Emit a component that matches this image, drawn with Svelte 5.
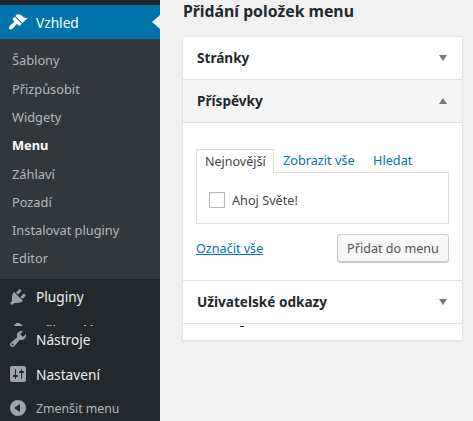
<script>
  const subs = [
    { t: 'Šablony' }, { t: 'Přizpůsobit' }, { t: 'Widgety' }, { t: 'Menu', cur: true },
    { t: 'Záhlaví' }, { t: 'Pozadí' }, { t: 'Instalovat pluginy' }, { t: 'Editor' }
  ];
</script>

<div class="page">
  <nav class="side">
    <div class="top"></div>
    <div class="active">
      <svg class="ic" viewBox="0 0 20 20"><path d="M14.480 11.060L7.410 3.990l1.500-1.500c.5-.56 2.300-.47 3.510.32 1.210.8 1.430 1.280 2.910 2.100 1.180.64 2.450 1.260 4.450.85zm-.71.71L6.700 4.700 4.930 6.470c-.39.39-.39 1.020 0 1.410l1.060 1.060c.39.39.39 1.030 0 1.420-.6.6-1.430 1.110-2.210 1.690-.35.26-.7.53-1.010.84C1.430 14.230.4 16.080 1.400 17.070c.99 1 2.840-.03 4.180-1.360.31-.31.58-.66.85-1.020.57-.78 1.080-1.610 1.690-2.210.39-.39 1.020-.39 1.410 0l1.060 1.060c.39.39 1.020.39 1.410 0z" fill="#fff"/></svg>
      <span class="lab">Vzhled</span>
      <i class="notch"></i>
    </div>
    <ul class="sub">
      {#each subs as s}
        <li class:cur={s.cur}>{s.t}</li>
      {/each}
    </ul>
    <div class="item plug">
      <svg class="ic" viewBox="0 0 20 20"><path d="M13.110 4.360L9.870 7.600 8 5.730l3.240-3.240c.35-.34 1.050-.2 1.560.32.52.51.66 1.210.31 1.550zm-8 1.770l.91-1.120 9.010 9.010-1.190.84c-.71.71-2.630 1.160-3.820 1.160H6.140L4.900 17.260c-.59.59-1.540.59-2.120 0-.59-.58-.59-1.530 0-2.120l1.240-1.240v-3.880c0-1.130.4-3.190 1.090-3.890zm7.260 3.970l3.240-3.240c.34-.35 1.040-.21 1.550.31.52.51.66 1.210.31 1.550l-3.240 3.250z" fill="#9ea3a8"/></svg>
      <span class="lab">Pluginy</span>
    </div>
    <div class="clip">
      <svg class="ic" viewBox="0 0 20 20"><circle cx="10" cy="6.500" r="4.500" fill="#9ea3a8"/></svg>
      <span class="lab">Uživatelé</span>
    </div>
    <div class="item tools">
      <svg class="ic" viewBox="0 0 20 20"><path d="M16.680 9.770c-1.340 1.340-3.300 1.670-4.950.99l-5.410 6.520c-.99.99-2.590.99-3.580 0s-.99-2.590 0-3.570l6.520-5.420c-.68-1.650-.35-3.610.99-4.950 1.280-1.280 3.120-1.620 4.720-1.060l-2.890 2.890 2.820 2.820 2.860-2.870c.53 1.580.18 3.390-1.080 4.650zM3.810 16.210c.4.39 1.040.39 1.430 0 .4-.4.4-1.040 0-1.430-.39-.4-1.030-.4-1.430 0-.39.39-.39 1.030 0 1.430z" fill="#9ea3a8"/></svg>
      <span class="lab">Nástroje</span>
    </div>
    <div class="item settings">
      <svg class="ic" viewBox="0 0 20 20"><path d="M18 16V4c0-1.100-.9-2-2-2H4c-1.100 0-2 .9-2 2v12c0 1.100.9 2 2 2h12c1.100 0 2-.9 2-2zM8 11h1c.55 0 1 .45 1 1s-.45 1-1 1H8v1.500c0 .28-.22.5-.5.5s-.5-.22-.5-.5V13H6c-.55 0-1-.45-1-1s.45-1 1-1h1V5.500c0-.28.22-.5.5-.5s.5.22.5.5V11zm5-2h-1c-.55 0-1-.45-1-1s.45-1 1-1h1V5.500c0-.28.22-.5.5-.5s.5.22.5.5V7h1c.55 0 1 .45 1 1s-.45 1-1 1h-1v5.500c0 .28-.22.5-.5.5s-.5-.22-.5-.5V9z" fill="#9ea3a8"/></svg>
      <span class="lab">Nastavení</span>
    </div>
    <div class="item collapse">
      <svg class="ic" viewBox="0 0 20 20"><circle cx="10" cy="10" r="8" fill="#9ea3a8"/><path d="M12 6v8l-6-4z" fill="#23282d"/></svg>
      <span class="lab small">Zmenšit menu</span>
    </div>
  </nav>

  <main>
    <h3>Přidání položek menu</h3>
    <section class="box">
      <header><b>Stránky</b><i class="tri down"></i></header>
      <header class="open"><b>Příspěvky</b><i class="tri up"></i></header>
      <div class="body">
        <div class="tabs">
          <span class="tab on">Nejnovější</span>
          <span class="tab">Zobrazit vše</span>
          <span class="tab">Hledat</span>
        </div>
        <div class="panel">
          <span class="check"></span><span class="ptext">Ahoj Světe!</span>
        </div>
        <div class="actions">
          <a href="#all">Označit vše</a>
          <button>Přidat do menu</button>
        </div>
      </div>
      <header class="last"><b>Uživatelské odkazy</b><i class="tri down"></i></header>
      <div class="foot"><i class="speck"></i></div>
    </section>
  </main>
</div>

<style>
  :global(body) { margin: 0; background: #f1f1f1; overflow: hidden; }
  * { box-sizing: border-box; }
  .page { display: flex; width: 473px; height: 421px; overflow: hidden; font-family: "Noto Sans", sans-serif; font-size: 13px; color: #444; }
  .side { width: 160px; flex: none; background: #23282d; height: 421px; display: flex; flex-direction: column; }
  .side > * { flex: none; }
  .top { height: 5px; }
  .active { height: 34px; background: #0073aa; display: flex; align-items: center; position: relative; color: #fff; }
  .ic { width: 20px; height: 20px; margin-left: 8px; flex: none; }
  .lab { margin-left: 8px; font-size: 13.700px; color: #eee; }
  .active .lab { color: #fff; }
  .notch { position: absolute; right: 0; top: 10px; border: 7px solid transparent; border-left: 0; border-right: 8px solid #f1f1f1; }
  .sub { list-style: none; margin: 0; padding: 6.400px 0 0; background: #32373c; height: 240px; }
  .sub li { height: 28.300px; line-height: 30px; padding-left: 12px; color: #b4b9be; font-size: 12.800px; }
  .sub li.cur { color: #fff; font-weight: 700; }
  .item { display: flex; align-items: center; height: 34px; }
  .plug { height: 35px; }
  .clip { height: 12px; overflow: hidden; display: flex; align-items: flex-start; }
  .clip .ic { margin-top: 7px; }
  .clip .lab { line-height: 14px; margin-top: 10px; }
  .tools { height: 31px; padding-bottom: 5px; }
  .settings { height: 34px; }
  .collapse { height: 30px; padding-top: 4px; }
  .small { font-size: 12.300px; color: #b4b9be; }
  main { flex: 1; padding: 1px 24px 0 23px; }
  h3 { margin: 0; font-size: 15.800px; font-weight: 700; line-height: 20px; color: #23282d; }
  .box { margin-top: 15px; background: #fff; border: 1px solid #e5e5e5; box-shadow: 0 1px 1px rgba(0,0,0,.04); width: 281px; margin-left: -1px; }
  header { height: 43px; display: flex; align-items: center; justify-content: space-between; padding: 0 14px 2px; border-bottom: 1px solid #e1e1e1; color: #23282d; font-size: 13.600px; }
  header.open { background: #f5f5f5; }
  .tri { width: 0; height: 0; border-left: 4px solid transparent; border-right: 4px solid transparent; margin-right: 1px; margin-top: 2px; }
  .tri.down { border-top: 6px solid #72777c; }
  .tri.up { border-bottom: 6px solid #72777c; }
  .body { padding: 26px 13px 18px; border-bottom: 1px solid #e1e1e1; }
  .tabs { display: flex; height: 23px; font-size: 12.700px; color: #0073aa; }
  .tab { padding: 0 9px; line-height: 23px; }
  .tab.on { color: #444; border: 1px solid #ddd; border-bottom: 0; padding: 0 8px; background: #fff; margin-bottom: -1px; height: 24px; width: 78px; position: relative; z-index: 1; font-size: 12.500px; }
  .tab.on + .tab { width: 90px; }
  .panel { border: 1px solid #ddd; height: 52px; display: flex; align-items: center; padding: 3px 0 0 12px; background: #fff; margin-bottom: -1px; }
  .check { width: 16px; height: 16px; border: 1px solid #b4b9be; background: #fff; box-shadow: inset 0 1px 2px rgba(0,0,0,.07); }
  .ptext { margin-left: 7px; font-size: 12.700px; color: #444; }
  .actions { display: flex; justify-content: space-between; align-items: center; margin-top: 11px; }
  a { color: #0073aa; font-size: 12.600px; }
  button { font: inherit; font-size: 12.600px; color: #555; height: 28px; width: 112px; padding: 0; background: #f7f7f7; border: 1px solid #ccc; border-radius: 3px; box-shadow: 0 1px 0 #ccc; }
  .foot { height: 16px; padding: 2px 0 0 57px; }
  .speck { display: block; width: 4px; height: 1px; background: #223344; }
</style>
